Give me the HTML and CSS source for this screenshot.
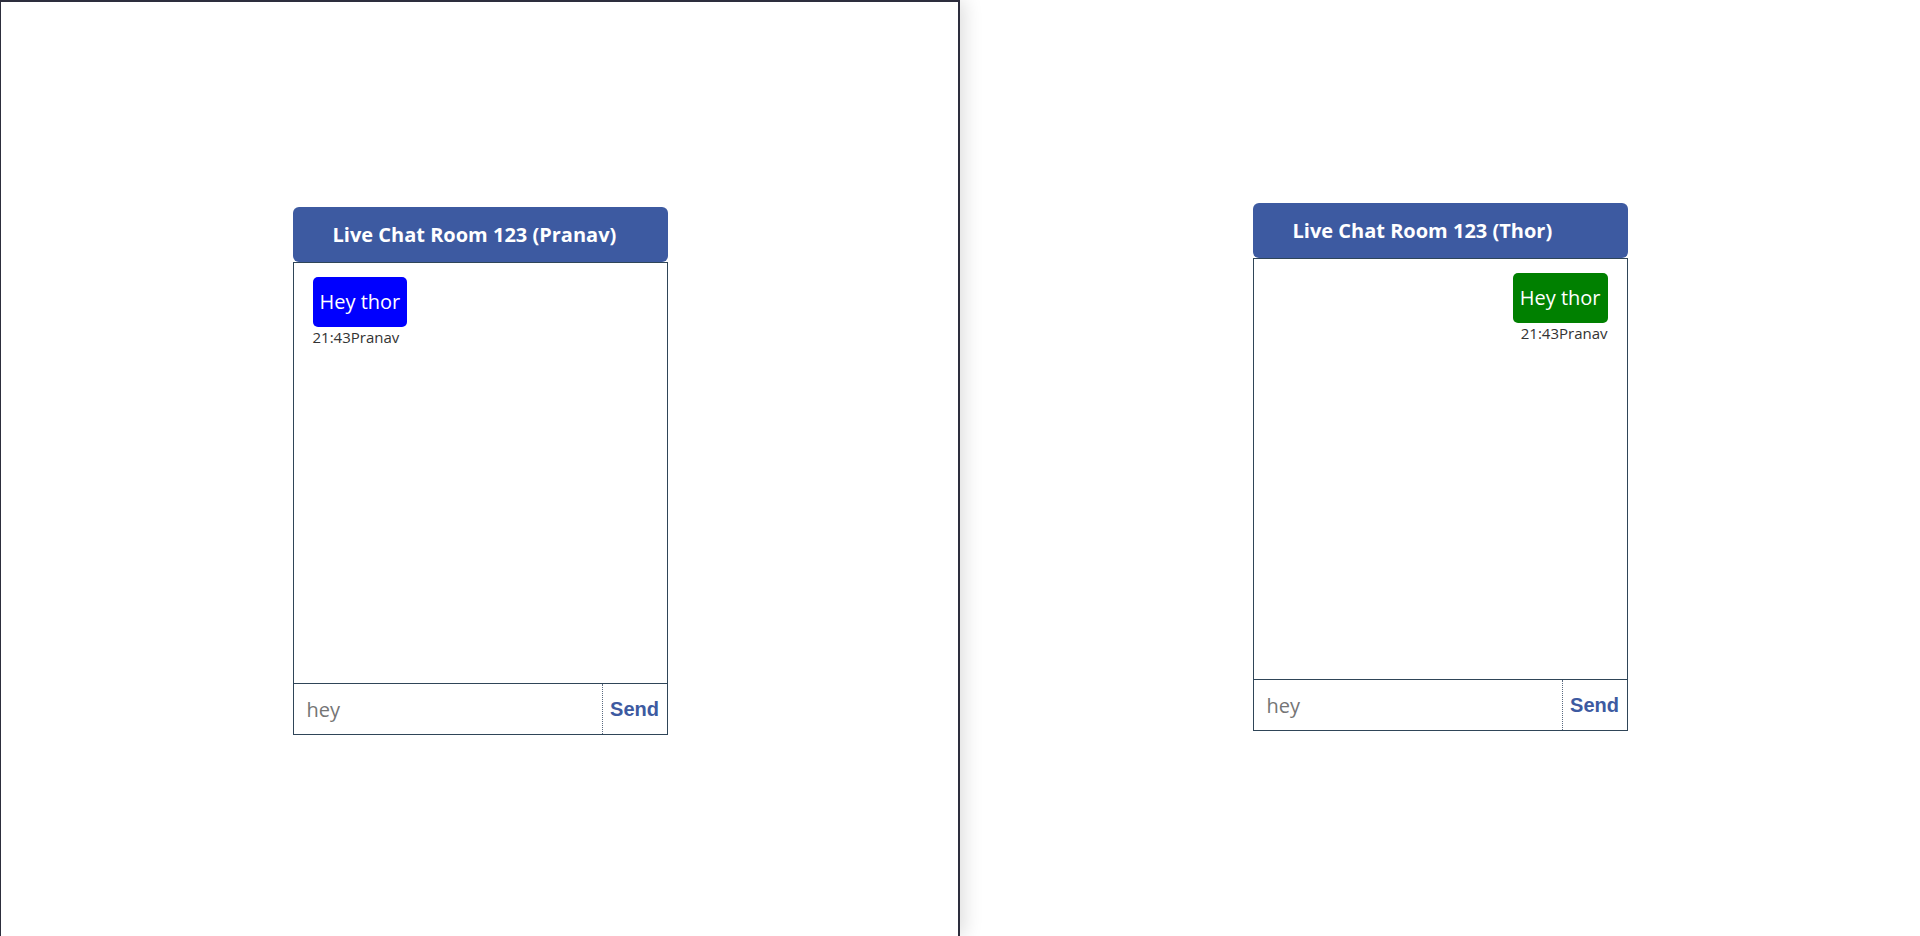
FILE: index.html
```html
<!DOCTYPE html>
<html>
<head>
<meta charset="utf-8">
<title>Live Chat</title>
<link rel="stylesheet" href="styles.css">
</head>
<body>
<div class="panes">
  <div class="pane pane-left">
    <div class="chat">
      <div class="chat-header">Live Chat Room 123 (Pranav)</div>
      <div class="chat-body">
        <div class="messages">
          <div class="msg msg-self">
            <div class="bubble bubble-blue">Hey thor</div>
            <div class="meta">21:43Pranav</div>
          </div>
        </div>
        <div class="composer">
          <input class="composer-input" type="text" placeholder="hey">
          <button class="composer-send">Send</button>
        </div>
      </div>
    </div>
  </div>
  <div class="pane pane-right">
    <div class="chat">
      <div class="chat-header">Live Chat Room 123 (Thor)</div>
      <div class="chat-body">
        <div class="messages">
          <div class="msg msg-other">
            <div class="bubble bubble-green">Hey thor</div>
            <div class="meta">21:43Pranav</div>
          </div>
        </div>
        <div class="composer">
          <input class="composer-input" type="text" placeholder="hey">
          <button class="composer-send">Send</button>
        </div>
      </div>
    </div>
  </div>
</div>
</body>
</html>
```

FILE: styles.css
```css
* { box-sizing: border-box; }
html, body {
  margin: 0;
  padding: 0;
  background: #ffffff;
  font-family: "Open Sans", "Noto Sans", sans-serif;
}
.panes {
  display: flex;
  width: 1920px;
  height: 936px;
  overflow: hidden;
}
.pane {
  width: 960px;
  height: 936px;
  display: flex;
  flex-direction: column;
  align-items: center;
}
.pane-left {
  position: relative;
  z-index: 1;
  border-top: 2px solid #2d2e3d;
  border-left: 1px solid #2d2e3d;
  border-right: 2px solid #2d2e3d;
  padding-top: 205px;
  box-shadow: 4px 0 18px rgba(0, 0, 0, 0.14);
  background: #fff;
}
.pane-left .chat { margin-left: 1px; }
.pane-right {
  padding-top: 203px;
}
.chat {
  width: 375px;
  display: flex;
  flex-direction: column;
}
.chat-header {
  height: 55px;
  background: #3d5aa1;
  border-radius: 6px;
  color: #ffffff;
  font-weight: 700;
  font-size: 20px;
  line-height: 55px;
  padding-left: 40px;
}
.chat-body {
  border: 1px solid #2f4558;
  display: flex;
  flex-direction: column;
}
.messages {
  height: 420px;
  padding: 14px 19px;
  display: flex;
  flex-direction: column;
}
.msg {
  display: flex;
  flex-direction: column;
}
.msg-self { align-items: flex-start; }
.msg-other { align-items: flex-end; }
.bubble {
  color: #ffffff;
  font-size: 20px;
  line-height: 26px;
  padding: 12px 7px;
  border-radius: 5px;
}
.bubble-blue { background: #0000ff; }
.bubble-green { background: #008000; }
.meta {
  font-size: 15px;
  line-height: 20px;
  color: #333333;
  margin-top: 0;
}
.composer {
  display: flex;
  height: 51px;
  border-top: 1px solid #2f4558;
}
.composer-input {
  flex: 1;
  min-width: 0;
  border: none;
  outline: none;
  padding: 0 0 0 13px;
  font-family: "Open Sans", "Noto Sans", sans-serif;
  font-size: 20px;
  color: #333;
  background: #fff;
}
.composer-input::placeholder { color: #757575; }
.composer-send {
  width: 65px;
  border: none;
  border-left: 1px dotted #5a6a80;
  background: #fff;
  color: #3d5aa1;
  font-family: "Liberation Sans", Arial, sans-serif;
  font-weight: 700;
  font-size: 20px;
  padding: 0;
  text-align: center;
}
```
